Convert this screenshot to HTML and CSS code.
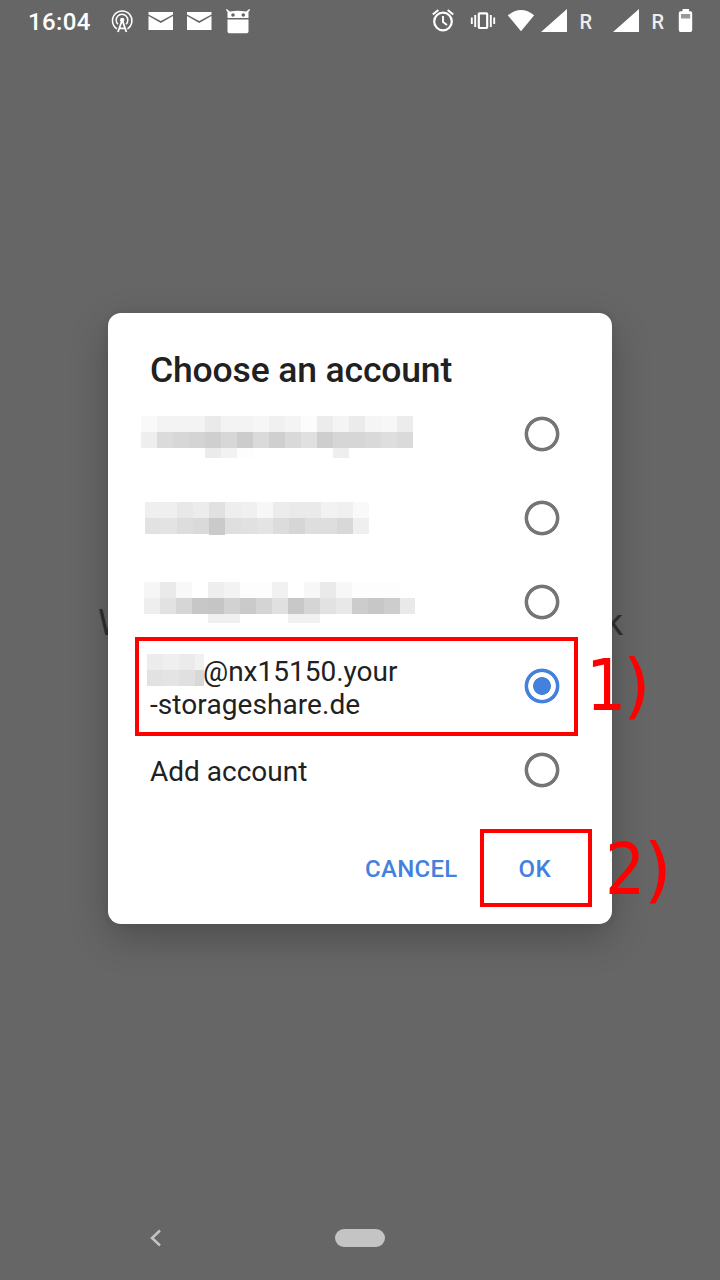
FILE: index.html
```html
<!DOCTYPE html>
<html lang="en">
<head>
<meta charset="utf-8">
<title>Choose an account</title>
<link rel="stylesheet" href="styles.css">
</head>
<body>
<div class="screen">
  <header class="status">
    <span class="clock">16:04</span>
    <svg class="status-left" width="150" height="44" viewBox="105 0 150 44">
      <g fill="none" stroke="#fff" stroke-width="1.5">
        <path d="M117 28.8A9.7 9.7 0 1 1 127.400 28.800"/>
        <path d="M118 24.300A5.800 5.800 0 1 1 126 24.300"/>
        <path d="M122.200 20L118 32M122.200 20L126.400 32M119.500 28.300H125" stroke-width="1.8"/>
      </g>
      <circle cx="122.200" cy="20" r="2.200" fill="#fff"/>
      <g fill="#fff">
        <path d="M148.500 12H173V14.500L160.800 21L148.500 14.500ZM148.500 16L160.800 23L173 16V30H148.500Z"/>
        <path d="M187 12H211.500V14.500L199.200 21L187 14.500ZM187 16L199.200 23L211.500 16V30H187Z"/>
        <path fill-rule="evenodd" d="M227.500 10.500V18H248.500V10.500L245.800 11.500Q238 10 230.200 11.500Z M231.200 15a1.800 1.800 0 1 0 3.600 0a1.800 1.800 0 1 0-3.600 0M241.500 15a1.800 1.800 0 1 0 3.600 0a1.800 1.800 0 1 0-3.600 0"/>
        <path d="M227.500 19.500H248.500V31.500Q248.500 33.200 246.800 33.200H229.200Q227.500 33.200 227.500 31.500Z"/>
      </g>
      <path d="M228.500 11.500L226.300 9.500M247.500 11.500L249.700 9.500" stroke="#fff" stroke-width="1.500"/>
    </svg>
    <svg class="status-right" width="290" height="44" viewBox="430 0 290 44">
      <g fill="none" stroke="#fff">
        <circle cx="443" cy="21.500" r="8.800" stroke-width="2.200"/>
        <path d="M443 16V22L447 25" stroke-width="1.900"/>
        <path d="M432.800 14.500L438.300 10M447.700 10L453.200 14.500" stroke-width="2.100"/>
        <rect x="478.800" y="13.300" width="8.400" height="14.700" rx=".7" stroke-width="2.200"/>
        <path d="M475.200 15V27M490.800 15V27M471.800 17.500V24M494.200 17.500V24" stroke-width="1.900"/>
      </g>
      <g fill="#fff">
        <path d="M507.800 15.300Q521 4.700 534.200 15.300L521 31.300Z"/>
        <path d="M541 32L567 9V32Z"/>
        <path d="M613 32L639 9V32Z"/>
        <path d="M682.500 9H689V11.200H690.500Q692.200 11.200 692.200 13V30Q692.200 32 690.500 32H680.500Q678.800 32 678.800 30V13Q678.800 11.200 680.500 11.200H682.500Z"/>
      </g>
      <rect x="681" y="14" width="9.200" height="4.500" fill="#999"/>
      <g class="roaming"><text x="579.500" y="29.300">R</text><text x="651.500" y="29.300">R</text></g>
    </svg>
  </header>

  <div class="behind"><span>W</span><span>k</span></div>

  <main class="dialog">
    <h1 class="title">Choose an account</h1>
    <ul class="accounts">
      <li class="row">
        <svg class="mosaic" width="306" height="84" viewBox="108 392 306 84" shape-rendering="crispEdges">
          <g transform="translate(141 416) scale(16)">
            <rect width="1" height="1" fill="#f9f9f9"/><rect x="1" width="3" height="1" fill="#f3f3f3"/><rect x="4" width="1" height="1" fill="#eaeaea"/><rect x="5" width="2" height="1" fill="#f3f3f3"/><rect x="7" width="1" height="1" fill="#f6f6f6"/><rect x="8" width="1" height="1" fill="#f0f0f0"/><rect x="9" width="1" height="1" fill="#f4f4f4"/><rect x="10" width="1" height="1" fill="#fcfcfc"/><rect x="11" width="1" height="1" fill="#ececec"/><rect x="12" width="1" height="1" fill="#f4f4f4"/><rect x="13" width="1" height="1" fill="#ebebeb"/><rect x="14" width="1" height="1" fill="#f5f5f5"/><rect x="15" width="1" height="1" fill="#f7f7f7"/><rect x="16" width="1" height="1" fill="#ececec"/>
            <rect y="1" width="1" height="1" fill="#eee"/><rect x="1" y="1" width="1" height="1" fill="#dbdbdb"/><rect x="2" y="1" width="1" height="1" fill="#d7d7d7"/><rect x="3" y="1" width="1" height="1" fill="#d4d4d4"/><rect x="4" y="1" width="1" height="1" fill="#cfcfcf"/><rect x="5" y="1" width="1" height="1" fill="#d7d7d7"/><rect x="6" y="1" width="1" height="1" fill="#ccc"/><rect x="7" y="1" width="1" height="1" fill="#dadada"/><rect x="8" y="1" width="1" height="1" fill="#cfcfcf"/><rect x="9" y="1" width="1" height="1" fill="#d9d9d9"/><rect x="10" y="1" width="1" height="1" fill="#e0e0e0"/><rect x="11" y="1" width="1" height="1" fill="#cecece"/><rect x="12" y="1" width="2" height="1" fill="#d6d6d6"/><rect x="14" y="1" width="1" height="1" fill="#d9d9d9"/><rect x="15" y="1" width="1" height="1" fill="#dedede"/><rect x="16" y="1" width="1" height="1" fill="#dadada"/>
            <rect x="4" y="2" width="1" height=".625" fill="#ebebeb"/><rect x="5" y="2" width="1" height=".625" fill="#f2f2f2"/><rect x="6" y="2" width="1" height=".625" fill="#fdfdfd"/><rect x="12" y="2" width="1" height=".625" fill="#eee"/>
          </g>
        </svg>
        <i class="radio"></i>
      </li>
      <li class="row">
        <svg class="mosaic" width="306" height="84" viewBox="108 476 306 84" shape-rendering="crispEdges">
          <g transform="translate(145 502) scale(16)">
            <rect width="2" height="1" fill="#efefef"/><rect x="2" width="1" height="1" fill="#e8e8e8"/><rect x="3" width="1" height="1" fill="#ececec"/><rect x="4" width="1" height="1" fill="#e1e1e1"/><rect x="5" width="1" height="1" fill="#eee"/><rect x="6" width="1" height="1" fill="#f0f0f0"/><rect x="7" width="1" height="1" fill="#f7f7f7"/><rect x="8" width="1" height="1" fill="#ececec"/><rect x="9" width="2" height="1" fill="#eaeaea"/><rect x="11" width="1" height="1" fill="#f2f2f2"/><rect x="12" width="1" height="1" fill="#f0f0f0"/><rect x="13" width="1" height="1" fill="#f9f9f9"/>
            <rect y="1" width="1" height="1" fill="#e2e2e2"/><rect x="1" y="1" width="1" height="1" fill="#e3e3e3"/><rect x="2" y="1" width="1" height="1" fill="#ddd"/><rect x="3" y="1" width="1" height="1" fill="#dadada"/><rect x="4" y="1" width="1" height="1.062" fill="#cacaca"/><rect x="5" y="1" width="1" height="1" fill="#dfdfdf"/><rect x="6" y="1" width="1" height="1" fill="#e1e1e1"/><rect x="7" y="1" width="1" height="1" fill="#e4e4e4"/><rect x="8" y="1" width="1" height="1" fill="#dcdcdc"/><rect x="9" y="1" width="1" height="1" fill="#d6d6d6"/><rect x="10" y="1" width="2" height="1" fill="#dedede"/><rect x="12" y="1" width="1" height="1" fill="#d8d8d8"/><rect x="13" y="1" width="1" height="1" fill="#efefef"/>
          </g>
        </svg>
        <i class="radio"></i>
      </li>
      <li class="row">
        <svg class="mosaic" width="308" height="84" viewBox="108 560 308 84" shape-rendering="crispEdges">
          <g transform="translate(144 582) scale(16)">
            <rect width="1" height="1" fill="#f6f6f6"/><rect x="1" width="1" height="1" fill="#eaeaea"/><rect x="2" width="1" height="1" fill="#f8f8f8"/><rect x="4" width="1" height="1" fill="#eee"/><rect x="5" width="1" height="1" fill="#f3f3f3"/><rect x="6" width="2" height="1" fill="#fdfdfd"/><rect x="8" width="1" height="1" fill="#f1f1f1"/><rect x="10" width="1" height="1" fill="#f7f7f7"/><rect x="11" width="1" height="1" fill="#eaeaea"/><rect x="12" width="1" height="1" fill="#f7f7f7"/><rect x="13" width="3" height="1" fill="#fdfdfd"/>
            <rect y="1" width="1" height="1" fill="#eee"/><rect x="1" y="1" width="1" height="1" fill="#e2e2e2"/><rect x="2" y="1" width="1" height="1" fill="#d6d6d6"/><rect x="3" y="1" width="1" height="1" fill="#c7c7c7"/><rect x="4" y="1" width="1" height="1" fill="#c5c5c5"/><rect x="5" y="1" width="1" height="1" fill="#d2d2d2"/><rect x="6" y="1" width="1" height="1" fill="#cacaca"/><rect x="7" y="1" width="1" height="1" fill="#d4d4d4"/><rect x="8" y="1" width="1" height="1" fill="#e0e0e0"/><rect x="9" y="1" width="1" height="1" fill="#c8c8c8"/><rect x="10" y="1" width="1" height="1" fill="#d5d5d5"/><rect x="11" y="1" width="1" height="1" fill="#e2e2e2"/><rect x="12" y="1" width="1" height="1" fill="#e8e8e8"/><rect x="13" y="1" width="1" height="1" fill="#ccc"/><rect x="14" y="1" width="1" height="1" fill="#c7c7c7"/><rect x="15" y="1" width="1" height="1" fill="#cdcdcd"/><rect x="16" y="1" width=".94" height="1" fill="#e9e9e9"/>
            <rect x="4" y="2" width="2" height=".56" fill="#f0f0f0"/><rect x="9" y="2" width="2" height=".56" fill="#f1f1f1"/>
          </g>
        </svg>
        <i class="radio"></i>
      </li>
      <li class="row">
        <div class="label address">
          <div class="first"><svg class="name" width="57" height="32" shape-rendering="crispEdges"><rect width="16" height="16" fill="#ececec"/><rect x="16" width="16" height="16" fill="#efefef"/><rect x="32" width="16" height="16" fill="#ebebeb"/><rect x="48" width="9" height="16" fill="#f1f1f1"/><rect y="16" width="16" height="16" fill="#e2e2e2"/><rect x="16" y="16" width="16" height="16" fill="#e4e4e4"/><rect x="32" y="16" width="16" height="16" fill="#e0e0e0"/><rect x="48" y="16" width="9" height="16" fill="#d8d8d8"/></svg><span class="host">@nx15150.your</span></div>
          <div class="second">-storageshare.de</div>
        </div>
        <i class="radio checked"></i>
      </li>
      <li class="row">
        <div class="label add">Add account</div>
        <i class="radio"></i>
      </li>
    </ul>
    <div class="actions"><span class="cancel">CANCEL</span><span class="ok">OK</span></div>
  </main>

  <div class="mark mark-account"></div>
  <div class="mark mark-ok"></div>
  <div class="step step-one"><span class="digit">1</span><span>)</span></div>
  <div class="step step-two"><span class="digit">2</span><span>)</span></div>

  <footer class="nav">
    <svg width="12" height="18" viewBox="0 0 12 18"><path d="M11 1.500L3 9L11 16.500" fill="none" stroke="#c4c4c4" stroke-width="2.500"/></svg>
    <i class="home"></i>
  </footer>
</div>
</body>
</html>
```
FILE: styles.css
```css
* { box-sizing: border-box; }
body { margin: 0; }
.screen {
  position: relative;
  display: flex;
  flex-direction: column;
  width: 720px;
  height: 1280px;
  overflow: hidden;
  background: #666;
  font-family: Roboto, "Noto Sans", sans-serif;
  color: #212121;
}
.status { display: flex; height: 44px; color: #fff; }
.clock {
  width: 105px;
  padding-left: 28px;
  font-size: 24px;
  font-weight: 500;
  line-height: 45px;
  letter-spacing: .4px;
}
.status-right { margin-left: 175px; }
.roaming { fill: #eee; font-size: 20px; font-weight: 500; }
.dialog {
  position: relative;
  width: 504px;
  height: 611px;
  margin: 269px 0 0 108px;
  border-radius: 13px;
  background: #fff;
  box-shadow: 0 14px 38px rgba(0, 0, 0, .24), 0 0 8px rgba(0, 0, 0, .06);
}
.title {
  height: 79px;
  margin: 0;
  padding: 36px 0 0 42px;
  font-size: 35.500px;
  font-weight: 500;
  line-height: 42px;
  letter-spacing: -.15px;
  white-space: nowrap;
}
.accounts { margin: 0; padding: 0; list-style: none; }
.row {
  display: flex;
  align-items: center;
  justify-content: space-between;
  height: 84px;
  padding-right: 52px;
}
.mosaic { display: block; }
.radio {
  width: 36px;
  height: 36px;
  background: radial-gradient(circle, transparent 13.400px, #757575 14.200px, #757575 17px, transparent 17.800px);
}
.radio.checked {
  background: radial-gradient(circle, #4481dc 8.500px, transparent 9.300px, transparent 13.400px, #4481dc 14.200px, #4481dc 17px, transparent 17.800px);
}
.label { padding-left: 42px; font-size: 28px; line-height: 33px; white-space: nowrap; }
.address { padding-top: 2px; }
.add { padding-top: 2px; }
.first { display: flex; height: 33px; margin-left: -3px; }
.host { margin-left: -1px; padding-top: 1px; }
.second { padding-top: 1px; letter-spacing: .08px; }
.actions {
  display: flex;
  padding: 43px 0 0 257px;
  font-size: 24px;
  font-weight: 500;
  line-height: 28px;
  letter-spacing: .3px;
  color: #4481dc;
}
.ok { margin-left: 61px; }
.behind {
  position: absolute;
  top: 600px;
  left: 98px;
  display: flex;
  justify-content: space-between;
  width: 525px;
  font-size: 36px;
  line-height: 47px;
  color: #303030;
}
.mark { position: absolute; border: 4px solid #f00; }
.mark-account { left: 135px; top: 637px; width: 443px; height: 99px; }
.mark-ok { left: 480px; top: 829px; width: 112px; height: 78px; }
.step {
  position: absolute;
  display: flex;
  font-family: "DejaVu Sans", sans-serif;
  font-size: 71px;
  line-height: 84px;
  color: #f00;
}
.digit { width: 39px; transform: scaleX(.89); transform-origin: left; }
.step-one { left: 586px; top: 644px; }
.step-one .digit { width: 37px; }
.step-two { left: 605px; top: 828px; }
.nav {
  display: flex;
  align-items: center;
  height: 84px;
  margin-top: auto;
  padding-left: 149px;
}
.home {
  width: 50px;
  height: 18px;
  margin-left: 174px;
  border-radius: 9px;
  background: #c4c4c4;
}
```
